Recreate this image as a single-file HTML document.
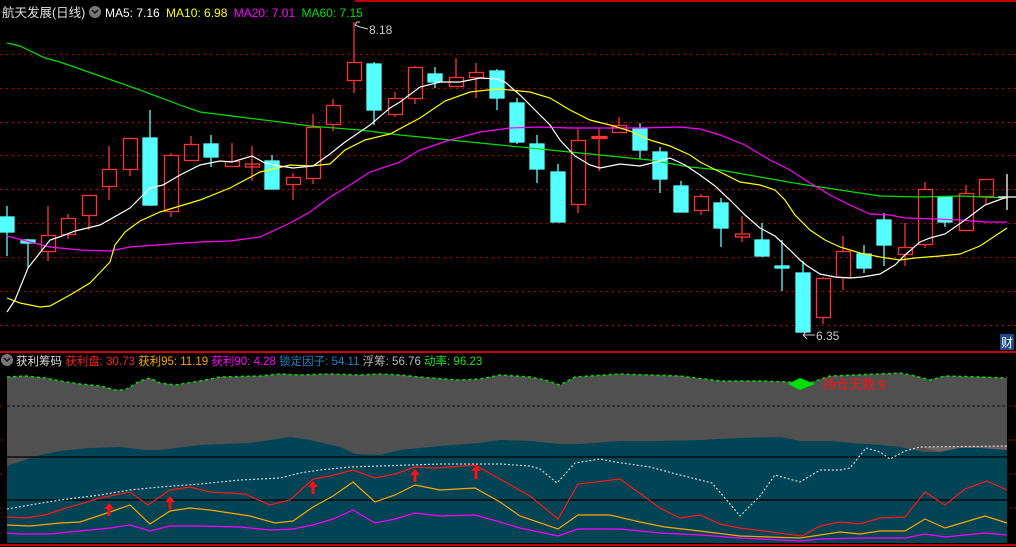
<!DOCTYPE html>
<html><head><meta charset="utf-8"><style>
html,body{margin:0;padding:0;background:#000;width:1016px;height:547px;overflow:hidden}
svg{display:block}
text{font-family:"Liberation Sans","Noto Sans CJK SC",sans-serif}
</style></head><body>
<svg width="1016" height="547" viewBox="0 0 1016 547" xmlns="http://www.w3.org/2000/svg">
<rect width="1016" height="547" fill="#000"/>
<line x1="355" y1="1" x2="1016" y2="1" stroke="#c00000" stroke-width="2"/>
<g stroke="#b00000" stroke-width="1" stroke-dasharray="2,4">
<line x1="0" y1="54.5" x2="1016" y2="54.5"/><line x1="0" y1="88.5" x2="1016" y2="88.5"/>
<line x1="0" y1="122.5" x2="1016" y2="122.5"/><line x1="0" y1="155.5" x2="1016" y2="155.5"/>
<line x1="0" y1="189.5" x2="1016" y2="189.5"/><line x1="0" y1="223.5" x2="1016" y2="223.5"/>
<line x1="0" y1="257.5" x2="1016" y2="257.5"/><line x1="0" y1="291.5" x2="1016" y2="291.5"/>
<line x1="0" y1="325.5" x2="1016" y2="325.5"/>
</g>
<line x1="0" y1="352" x2="1016" y2="352" stroke="#d00000" stroke-width="2"/>
<g stroke-width="1.3">
<g fill="#54ffff" stroke="#54ffff">
<line x1="7" y1="206" x2="7" y2="256"/><rect x="0" y="217" width="14" height="15"/>
<line x1="28" y1="239" x2="28" y2="268"/><rect x="21" y="240" width="14" height="3"/>
<line x1="150" y1="110" x2="150" y2="206"/><rect x="143" y="138" width="14" height="67"/>
<line x1="211" y1="135" x2="211" y2="167"/><rect x="204" y="144" width="14" height="13"/>
<line x1="272" y1="155" x2="272" y2="189"/><rect x="265" y="161" width="14" height="28"/>
<line x1="374" y1="62" x2="374" y2="125"/><rect x="367" y="64" width="14" height="46"/>
<line x1="435" y1="67" x2="435" y2="88"/><rect x="428" y="74" width="14" height="8"/>
<line x1="497" y1="69" x2="497" y2="110"/><rect x="490" y="71" width="14" height="27"/>
<line x1="517" y1="98" x2="517" y2="144"/><rect x="510" y="103" width="14" height="39"/>
<line x1="537" y1="135" x2="537" y2="183"/><rect x="530" y="144" width="14" height="25"/>
<line x1="558" y1="164" x2="558" y2="222"/><rect x="551" y="172" width="14" height="50"/>
<line x1="640" y1="123" x2="640" y2="159"/><rect x="633" y="128" width="14" height="22"/>
<line x1="660" y1="147" x2="660" y2="193"/><rect x="653" y="152" width="14" height="27"/>
<line x1="681" y1="181" x2="681" y2="212"/><rect x="674" y="186" width="14" height="26"/>
<line x1="721" y1="198" x2="721" y2="247"/><rect x="714" y="203" width="14" height="25"/>
<line x1="762" y1="223" x2="762" y2="257"/><rect x="755" y="240" width="14" height="16"/>
<line x1="782" y1="240" x2="782" y2="291"/><rect x="775" y="266" width="14" height="2"/>
<line x1="803" y1="261" x2="803" y2="332"/><rect x="796" y="273" width="14" height="59"/>
<line x1="864" y1="245" x2="864" y2="273"/><rect x="857" y="254" width="14" height="14"/>
<line x1="884" y1="213" x2="884" y2="266"/><rect x="877" y="220" width="14" height="25"/>
<line x1="945" y1="197" x2="945" y2="227"/><rect x="938" y="197" width="14" height="25"/>
</g>
<g fill="none" stroke="#ff3232">
<line x1="48" y1="206" x2="48" y2="235"/><line x1="48" y1="251" x2="48" y2="261"/><rect x="41.5" y="235.5" width="14" height="16"/>
<line x1="68" y1="214" x2="68" y2="218"/><line x1="68" y1="235" x2="68" y2="239"/><rect x="61.5" y="218.5" width="14" height="16"/>
<line x1="89" y1="216" x2="89" y2="230"/><rect x="82.5" y="195.5" width="14" height="20"/>
<line x1="109" y1="146" x2="109" y2="169"/><line x1="109" y1="187" x2="109" y2="200"/><rect x="102.5" y="169.5" width="14" height="17"/>
<line x1="130" y1="170" x2="130" y2="176"/><rect x="123.5" y="138.5" width="14" height="31"/>
<line x1="171" y1="153" x2="171" y2="155"/><line x1="171" y1="212" x2="171" y2="217"/><rect x="164.5" y="155.5" width="14" height="56"/>
<line x1="191" y1="136" x2="191" y2="144"/><rect x="184.5" y="144.5" width="14" height="16"/>
<line x1="232" y1="143" x2="232" y2="161"/><rect x="225.5" y="161.5" width="14" height="5"/>
<line x1="252" y1="146" x2="252" y2="181"/><rect x="245.5" y="164" width="14" height="3"/>
<line x1="293" y1="173" x2="293" y2="177"/><line x1="293" y1="185" x2="293" y2="200"/><rect x="286.5" y="177.5" width="14" height="7"/>
<line x1="313" y1="114" x2="313" y2="127"/><line x1="313" y1="179" x2="313" y2="184"/><rect x="306.5" y="127.5" width="14" height="51"/>
<line x1="333" y1="99" x2="333" y2="105"/><line x1="333" y1="125" x2="333" y2="131"/><rect x="326.5" y="105.5" width="14" height="19"/>
<line x1="354" y1="22" x2="354" y2="62"/><line x1="354" y1="81" x2="354" y2="93"/><rect x="347.5" y="62.5" width="14" height="18"/>
<line x1="395" y1="92" x2="395" y2="98"/><line x1="395" y1="115" x2="395" y2="117"/><rect x="388.5" y="98.5" width="14" height="16"/>
<line x1="415" y1="66" x2="415" y2="67"/><line x1="415" y1="99" x2="415" y2="104"/><rect x="408.5" y="67.5" width="14" height="31"/>
<line x1="456" y1="58" x2="456" y2="77"/><rect x="449.5" y="77.5" width="14" height="9"/>
<line x1="476" y1="63" x2="476" y2="72"/><line x1="476" y1="78" x2="476" y2="98"/><rect x="469.5" y="72.5" width="14" height="5"/>
<line x1="578" y1="129" x2="578" y2="140"/><line x1="578" y1="205" x2="578" y2="213"/><rect x="571.5" y="140.5" width="14" height="64"/>
<line x1="599" y1="129" x2="599" y2="171"/><rect x="592" y="136.5" width="15" height="2" fill="#ff3232"/>
<line x1="619" y1="117" x2="619" y2="125"/><rect x="612.5" y="125.5" width="14" height="7"/>
<line x1="701" y1="194" x2="701" y2="196"/><line x1="701" y1="211" x2="701" y2="215"/><rect x="694.5" y="196.5" width="14" height="14"/>
<line x1="742" y1="216" x2="742" y2="234"/><line x1="742" y1="237" x2="742" y2="242"/><rect x="735.5" y="234" width="14" height="3"/>
<line x1="823" y1="277" x2="823" y2="278"/><line x1="823" y1="318" x2="823" y2="324"/><rect x="816.5" y="278.5" width="14" height="39"/>
<line x1="843" y1="236" x2="843" y2="251"/><line x1="843" y1="278" x2="843" y2="290"/><rect x="836.5" y="251.5" width="14" height="26"/>
<line x1="905" y1="223" x2="905" y2="247"/><line x1="905" y1="255" x2="905" y2="266"/><rect x="898.5" y="247.5" width="14" height="7"/>
<line x1="925" y1="182" x2="925" y2="189"/><line x1="925" y1="245" x2="925" y2="248"/><rect x="918.5" y="189.5" width="14" height="55"/>
<line x1="966" y1="185" x2="966" y2="193"/><rect x="959.5" y="193.5" width="14" height="37"/>
<line x1="986" y1="197" x2="986" y2="205"/><rect x="979.5" y="179.5" width="14" height="17"/>
</g>
</g>
<g fill="none" stroke-width="1.2">
<polyline stroke="#00e000" points="7,43 20,46 45,58 60,62 100,76 140,90 180,105 200,112 240,117 280,122 310,126 360,130 400,135 450,140 500,145 550,150 600,155 650,160 690,167 720,170 760,177 800,184 840,190 880,196 920,197 960,196 1007,198"/>
<polyline stroke="#ff00ff" points="7,236 30,242 50,247 80,250 110,251 130,247 170,244 200,242 230,241 260,237 290,223 310,212 330,197 350,185 370,172 400,162 420,150 450,140 480,132 510,128 540,127 570,128 600,128 640,128 680,127 700,129 720,135 745,145 770,160 790,170 810,183 830,195 850,205 870,214 890,215 905,218 935,219 960,220 985,222 1007,222"/>
<polyline stroke="#ffff00" points="7,298 20,303 40,307 50,306 70,295 90,283 110,262 115,245 125,232 140,221 160,212 200,200 230,188 260,172 290,165 310,166 330,164 345,150 365,140 390,134 420,118 445,101 470,92 497,89 510,90 530,92 550,98 570,110 590,120 610,125 630,131 650,140 670,146 690,155 700,162 720,172 740,182 760,185 775,190 785,200 795,215 810,230 825,240 840,247 860,253 880,257 900,260 915,258 940,256 960,254 980,246 1007,228"/>
<polyline stroke="#ffffff" points="7,312 15,300 28,268 50,240 62,236 75,231 100,225 130,208 150,188 163,185 180,175 200,165 220,161 232,162 252,156 265,163 280,166 293,168 313,166 330,154 345,142 370,125 390,108 400,102 420,87 440,82 460,82 480,78 497,79 505,82 520,95 535,110 550,125 560,140 575,156 590,165 600,168 620,164 640,166 660,161 670,158 685,165 700,175 715,186 730,200 745,215 760,228 775,236 790,250 800,260 806,265 820,274 835,277 850,278 862,277 880,274 895,265 905,255 920,242 930,238 945,234 965,220 985,205 1007,197"/>
</g>
<line x1="1007" y1="174" x2="1007" y2="210" stroke="#fff" stroke-width="1.3"/>
<line x1="998" y1="197" x2="1016" y2="197" stroke="#fff" stroke-width="1.3"/>
<path d="M355 25 L357 22 L360 22 M355 25 L360 27 L368 29" stroke="#ccc" fill="none"/>
<text x="369" y="34" font-size="12" fill="#ccc">8.18</text>
<path d="M803 335 L815 335 M803 335 L807 331 M803 335 L807 339" stroke="#ccc" fill="none"/>
<text x="816" y="340" font-size="12" fill="#ccc">6.35</text>
<rect x="1000" y="334" width="14" height="16" fill="#1a4a8a"/>
<text x="1001" y="347" font-size="12" fill="#fff">财</text>
<text x="2" y="17" font-size="12.5" fill="#e0e0e0">航天发展(日线)</text>
<circle cx="95" cy="12" r="6" fill="#777"/>
<path d="M92 10 L95 13 L98 10" stroke="#111" stroke-width="1.5" fill="none"/>
<text x="105" y="17" font-size="12"><tspan fill="#fff">MA5: 7.16 </tspan><tspan fill="#ffff00" dx="3">MA10: 6.98 </tspan><tspan fill="#ff00ff" dx="3">MA20: 7.01 </tspan><tspan fill="#00e000" dx="3">MA60: 7.15</tspan></text>
<circle cx="7" cy="360" r="6" fill="#777"/>
<path d="M4 358 L7 361 L10 358" stroke="#111" stroke-width="1.5" fill="none"/>
<text x="16" y="365" font-size="11.5"><tspan fill="#ddd">获利筹码 </tspan><tspan fill="#ff2020">获利盘: 30.73 </tspan><tspan fill="#ffa500">获利95: 11.19 </tspan><tspan fill="#ff00ff">获利90: 4.28 </tspan><tspan fill="#1e82c8">锁定因子: 54.11 </tspan><tspan fill="#bbb">浮筹: 56.76 </tspan><tspan fill="#20e020">动率: 96.23</tspan></text>
<polygon fill="#505050" points="7,377 25,376 45,378 60,381 80,384 100,386 115,390 125,390 140,381 150,378 160,383 175,385 200,381 220,377 260,376 280,374 300,375 330,374 360,375 380,374 400,375 430,378 460,380 480,379 500,375 530,377 545,380 560,385 575,377 620,374 680,376 720,381 760,381 790,382 800,386 810,383 830,376 880,374 900,373 915,376 930,380 945,376 980,377 1007,378 1007,543 7,543"/>
<polyline fill="none" stroke="#00e000" stroke-width="1.5" stroke-dasharray="3,3" points="7,377 25,376 45,378 60,381 80,384 100,386 115,390 125,390 140,381 150,378 160,383 175,385 200,381 220,377 260,376 280,374 300,375 330,374 360,375 380,374 400,375 430,378 460,380 480,379 500,375 530,377 545,380 560,385 575,377 620,374 680,376 720,381 760,381 790,382 800,386 810,383 830,376 880,374 900,373 915,376 930,380 945,376 980,377 1007,378"/>
<polygon fill="#00e000" points="788,384 800,378 815,384 800,390"/>
<text x="823" y="389" font-size="13" fill="#ff1010">持仓天数:9</text>
<polygon fill="#706060" points="920,447 1007,446 1007,450 960,448 940,452"/>
<polygon fill="#004455" points="7,466 25,460 40,455 60,451 90,448 120,447 145,450 160,450 200,445 250,443 290,437 310,440 340,447 355,454 380,455 400,450 440,446 480,443 500,440 530,441 560,444 580,444 620,441 660,441 700,440 740,438 780,437 800,441 830,441 850,443 880,445 900,447 923,452 940,452 960,448 980,448 1007,450 1007,543 7,543"/>
<line x1="7" y1="406" x2="1007" y2="406" stroke="#111" stroke-dasharray="3,2"/>
<line x1="7" y1="457" x2="1007" y2="457" stroke="#000" stroke-width="1.3"/>
<line x1="7" y1="500" x2="1007" y2="500" stroke="#000" stroke-width="1.3"/>
<polyline fill="none" stroke="#c8d8d8" stroke-width="1.2" stroke-dasharray="2,2" points="7,509 30,505 60,500 100,495 130,490 160,487 200,484 240,480 280,478 300,473 320,470 350,467 380,466 410,465 440,464 500,464 530,466 540,469 557,483 575,463 600,459 615,462 650,467 680,475 700,480 712,483 730,504 740,516 760,496 775,475 800,482 820,470 840,470 850,468 866,448 880,452 890,459 905,451 920,447 1007,446"/>
<polyline fill="none" stroke="#ff1a1a" stroke-width="1.2" points="7,517 25,518 45,515 60,510 100,498 130,492 148,505 170,490 190,487 210,492 245,494 270,505 290,500 313,479 330,476 353,470 375,478 395,474 415,467 435,468 450,467 475,465 500,479 530,496 558,519 578,484 620,479 660,508 680,518 700,515 720,524 740,528 802,536 820,526 840,522 860,524 880,518 905,517 925,492 945,505 965,489 987,481 1007,490"/>
<polyline fill="none" stroke="#ffa500" stroke-width="1.2" points="7,525 30,526 60,523 80,522 110,512 130,505 150,524 170,511 190,508 210,510 250,516 275,523 293,521 313,507 333,496 353,482 375,502 395,495 415,485 440,490 475,488 500,502 520,516 558,529 578,515 610,515 640,522 665,527 700,531 740,536 800,538 840,532 860,534 880,531 905,531 925,519 945,528 965,522 985,516 1007,523"/>
<polyline fill="none" stroke="#ff00ff" stroke-width="1.2" points="7,533 20,534 50,534 80,531 110,528 130,525 150,531 170,526 200,526 240,527 270,530 293,529 313,525 333,519 353,510 375,523 395,519 415,513 440,516 475,515 500,522 520,528 558,536 578,529 620,529 660,533 700,535 740,538 800,541 820,539 860,538 905,538 925,534 945,537 985,533 1007,535"/>
<g fill="#ff1010">
<path d="M104 509 L109 503 L114 509 L110.5 509 L110.5 516 L107.5 516 L107.5 509Z"/>
<path d="M165 502 L170 496 L175 502 L171.5 502 L171.5 509 L168.5 509 L168.5 502Z"/>
<path d="M308 487 L313 481 L318 487 L314.5 487 L314.5 494 L311.5 494 L311.5 487Z"/>
<path d="M410 475 L415 469 L420 475 L416.5 475 L416.5 482 L413.5 482 L413.5 475Z"/>
<path d="M471 471 L476 465 L481 471 L477.5 471 L477.5 479 L474.5 479 L474.5 471Z"/>
</g>
<g stroke="#b00000" stroke-dasharray="2,3">
<line x1="0" y1="406" x2="5" y2="406"/><line x1="0" y1="440" x2="5" y2="440"/><line x1="0" y1="474" x2="5" y2="474"/><line x1="0" y1="508" x2="5" y2="508"/>
<line x1="1009" y1="406" x2="1016" y2="406"/><line x1="1009" y1="440" x2="1016" y2="440"/><line x1="1009" y1="474" x2="1016" y2="474"/><line x1="1009" y1="508" x2="1016" y2="508"/>
</g>
<line x1="0" y1="545" x2="1016" y2="545" stroke="#c00000" stroke-width="2"/>
</svg>
</body></html>
